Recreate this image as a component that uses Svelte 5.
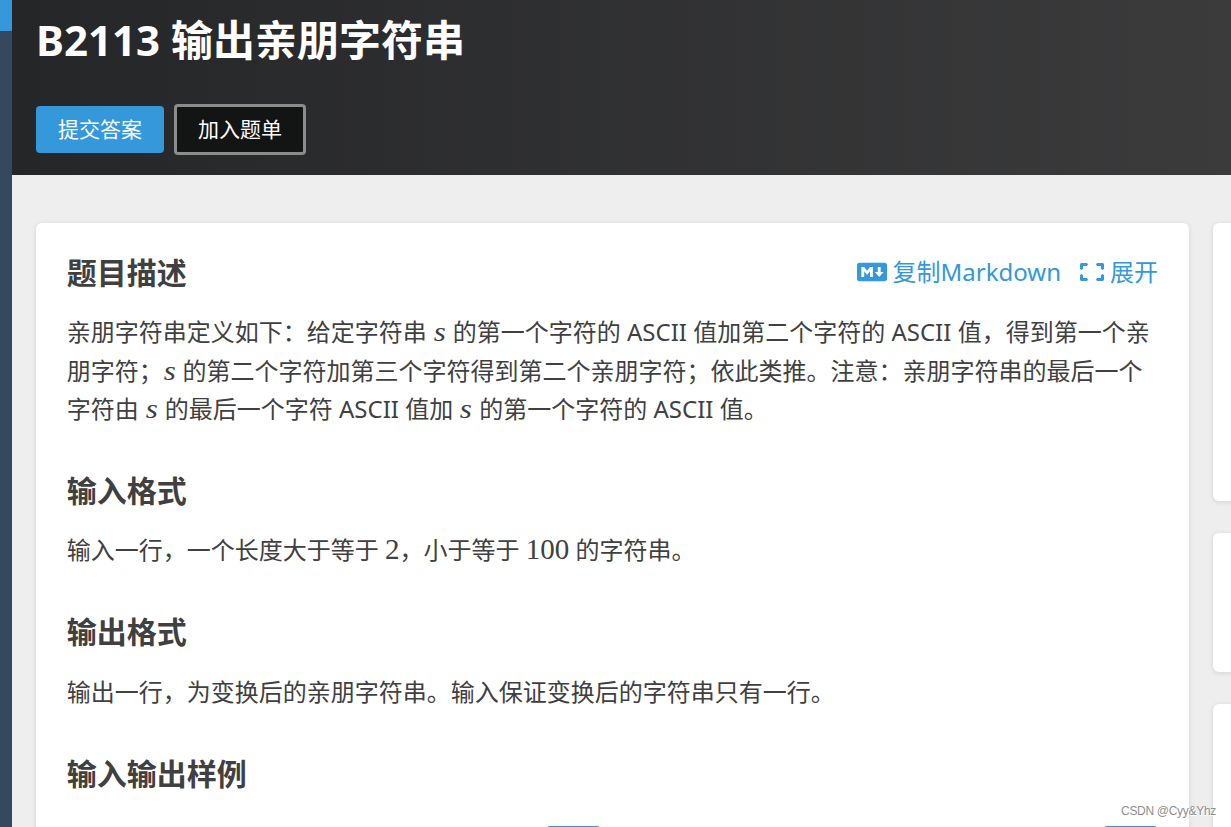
<script>
	const title = 'B2113 输出亲朋字符串';

	// heights of the sidebar cards, the last one runs off the page
	const sideCards = [278, 139, 300];
</script>

<div class="page">
	<nav class="rail">
		<div class="rail-active"></div>
	</nav>

	<div class="main">
		<header>
			<h1>{title}</h1>
			<div class="buttons">
				<button class="submit">提交答案</button>
				<button class="add">加入题单</button>
			</div>
		</header>

		<div class="content">
			<section class="card problem">
				<div class="card-top">
					<h2>题目描述</h2>
					<div class="actions">
						<a href="#copy">
							<svg class="md" viewBox="0 0 640 512">
								<path d="M593.8 59.1H46.2C20.7 59.1 0 79.8 0 105.2v301.5c0 25.5 20.7 46.2 46.2 46.2h547.7c25.5 0 46.2-20.7 46.1-46.1V105.2c0-25.4-20.7-46.1-46.2-46.1zM338.5 360.6H277v-120l-61.5 76.9-61.5-76.9v120H92.3V151.4h61.5l61.5 76.9 61.5-76.9h61.5v209.2zm135.3 3.1L381.5 256H443V151.4h61.5V256H566z" />
							</svg>
							<span>复制Markdown</span>
						</a>
						<a href="#expand">
							<svg class="expand" viewBox="0 0 24 18">
								<path d="M1 0H7L8 1.5L7 3H3V6L1.5 7L0 6V1ZM17 0H23L24 1V6L22.5 7L21 6V3H17L16 1.5ZM0 12L1.5 11L3 12V15H7L8 16.5L7 18H1L0 17ZM21 12L22.5 11L24 12V17L23 18H17L16 16.5L17 15H21Z" />
							</svg>
							<span>展开</span>
						</a>
					</div>
				</div>
				<p>
					亲朋字符串定义如下：给定字符串 <i>s</i> 的第一个字符的 ASCII 值加第二个字符的 ASCII 值，得到第一个亲<br />朋字符；<i>s</i> 的第二个字符加第三个字符得到第二个亲朋字符；依此类推。注意：亲朋字符串的最后一个<br />字符由 <i>s</i> 的最后一个字符 ASCII 值加 <i>s</i> 的第一个字符的 ASCII 值。
				</p>

				<h2>输入格式</h2>
				<p>输入一行，一个长度大于等于 <b>2</b>，小于等于 <b>100</b> 的字符串。</p>

				<h2>输出格式</h2>
				<p>输出一行，为变换后的亲朋字符串。输入保证变换后的字符串只有一行。</p>

				<h2>输入输出样例</h2>
				<div class="samples">
					<div class="sample"><span class="copy"></span></div>
					<div class="sample"><span class="copy"></span></div>
				</div>
			</section>

			<aside>
				{#each sideCards as height}
					<div class="card" style="height: {height}px"></div>
				{/each}
			</aside>
		</div>
	</div>

	<div class="watermark">CSDN @Cyy&amp;Yhz</div>
</div>

<style>
	:global(body) {
		overflow: hidden;
	}

	.page {
		position: relative;
		display: flex;
		width: 1231px;
		height: 827px;
		overflow: hidden;
		background-color: #eee;
		color: #404040;
		font-family: "Noto Sans", "Noto Sans CJK SC", sans-serif;
		font-size: 24px;
	}

	.rail {
		flex: none;
		width: 12px;
		background-color: #34495e;
	}

	.rail-active {
		height: 31px;
		background-color: #3498db;
	}

	.main {
		flex: none;
		width: 1219px;
	}

	header {
		box-sizing: border-box;
		height: 175px;
		padding: 10px 24px 0;
		background: linear-gradient(to right, #252628, #3b3b3c);
		color: white;
	}

	h1 {
		margin: 0;
		height: 94px;
		font-size: 42px;
		line-height: 60px;
	}

	.buttons {
		display: flex;
		align-items: center;
		gap: 10px;
	}

	button {
		box-sizing: border-box;
		padding: 0 0 4px;
		border: none;
		border-radius: 4px;
		color: white;
		font-family: inherit;
		font-size: 21px;
	}

	.submit {
		width: 128px;
		height: 47px;
		background-color: #3498db;
	}

	.add {
		width: 132px;
		height: 51px;
		border: 3px solid #8c8c8c;
		background-color: #131414;
	}

	.content {
		display: flex;
		align-items: flex-start;
		gap: 24px;
		padding: 48px 0 0 24px;
	}

	.card {
		box-sizing: border-box;
		border-radius: 6px;
		background-color: white;
		box-shadow: 0 1px 5px rgb(26 26 26 / 0.12);
	}

	.problem {
		flex: none;
		width: 1153px;
		height: 700px;
		padding: 29.7px 31px 30px 30.7px;
	}

	.card-top {
		display: flex;
		justify-content: space-between;
	}

	h2 {
		margin: 0;
		font-size: 30px;
		line-height: 40px;
	}

	.actions {
		display: flex;
		gap: 19px;
		line-height: 38px;
	}

	a {
		display: flex;
		align-items: center;
		height: 38px;
		color: #3498db;
		text-decoration: none;
	}

	svg {
		fill: currentColor;
	}

	.md {
		width: 30px;
		height: 24px;
		margin-right: 6px;
	}

	.expand {
		width: 24px;
		height: 18px;
		margin-right: 6px;
	}

	p {
		margin: 20.8px 0 42.6px;
		line-height: 38.2px;
		white-space: nowrap;
	}

	i,
	b {
		font-family: "Liberation Serif", serif;
		font-size: 29px;
		font-weight: normal;
		line-height: 1;
	}

	i {
		display: inline-block;
		width: 13.6px;
		font-size: 27px;
		text-align: center;
		transform: scaleX(1.15);
	}

	.samples {
		display: flex;
		justify-content: space-between;
		padding-top: 32.3px;
	}

	.sample {
		display: flex;
		justify-content: flex-end;
		width: 534px;
	}

	.copy {
		width: 53px;
		height: 30px;
		margin-right: 1px;
		border-radius: 3px;
		background-color: #3498db;
	}

	aside {
		display: flex;
		flex-direction: column;
		flex: none;
		gap: 32px;
		width: 400px;
	}

	.watermark {
		position: absolute;
		right: 15px;
		bottom: 8px;
		color: #8f8f8f;
		font-family: "Liberation Sans", sans-serif;
		font-size: 12px;
		letter-spacing: -0.3px;
		line-height: 15px;
		text-shadow: 1px 1px 0 #fff;
	}
</style>
